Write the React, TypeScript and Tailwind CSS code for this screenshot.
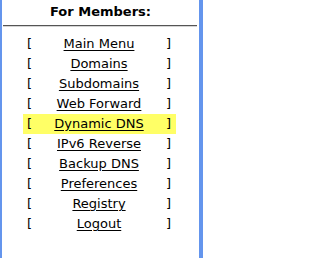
const LINKS = [
  "Main Menu",
  "Domains",
  "Subdomains",
  "Web Forward",
  "Dynamic DNS",
  "IPv6 Reverse",
  "Backup DNS",
  "Preferences",
  "Registry",
  "Logout",
];

const ACTIVE = "Dynamic DNS";

function MenuRow({ label }: { label: string }) {
  const active = label === ACTIVE;
  return (
    <li
      className={`grid h-[20px] grid-cols-[auto_1fr_auto] items-center pl-[4px] pr-[5px] leading-[20px] ${
        active ? "bg-[#ffff66]" : ""
      }`}
    >
      <span>[</span>
      <a href="#" className="text-center text-black underline underline-offset-[2px]">
        {label}
      </a>
      <span>]</span>
    </li>
  );
}

export default function App() {
  return (
    <div
      className="h-[258px] w-[203px] border-l-[2px] border-r-[4px] border-[#6495ed] bg-white text-[13px] text-black"
      style={{ fontFamily: '"DejaVu Sans", Verdana, sans-serif' }}
    >
      <h2 className="pt-[4px] text-center text-[13px] font-bold leading-[16px]">For Members:</h2>
      <div className="mt-[5px] ml-[1px] mr-[2px] border-t border-b border-t-[#555555] border-b-[#d4d4d4]" />
      <ul className="mt-[7px] ml-[21px] w-[153px]">
        {LINKS.map((l) => (
          <MenuRow key={l} label={l} />
        ))}
      </ul>
    </div>
  );
}
